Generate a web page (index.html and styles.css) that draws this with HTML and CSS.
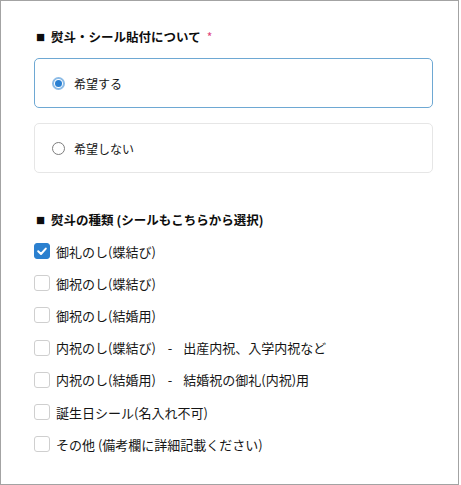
FILE: index.html
```html
<!DOCTYPE html>
<html lang="ja">
<head>
<meta charset="utf-8">
<link rel="stylesheet" href="styles.css">
</head>
<body>
<div class="frame">
  <h2 class="heading"><span class="sq">■</span>熨斗・シール貼付について<span class="req">*</span></h2>
  <label class="choice selected">
    <span class="radio on"></span>
    <span class="choice-text">希望する</span>
  </label>
  <label class="choice">
    <span class="radio"></span>
    <span class="choice-text">希望しない</span>
  </label>

  <h2 class="heading heading-2"><span class="sq">■</span>熨斗の種類 (シールもこちらから選択)</h2>
  <ul class="checks">
    <li class="check-row"><span class="box checked"><svg viewBox="0 0 16 16" width="16" height="16"><path d="M4.2 8.3 L7 11 L11.8 5.6" fill="none" stroke="#fff" stroke-width="2" stroke-linecap="round" stroke-linejoin="round"/></svg></span><span class="check-text">御礼のし(蝶結び)</span></li>
    <li class="check-row"><span class="box"></span><span class="check-text">御祝のし(蝶結び)</span></li>
    <li class="check-row"><span class="box"></span><span class="check-text">御祝のし(結婚用)</span></li>
    <li class="check-row"><span class="box"></span><span class="check-text">内祝のし(蝶結び)<span class="dash">-</span>出産内祝、入学内祝など</span></li>
    <li class="check-row"><span class="box"></span><span class="check-text">内祝のし(結婚用)<span class="dash">-</span>結婚祝の御礼(内祝)用</span></li>
    <li class="check-row"><span class="box"></span><span class="check-text">誕生日シール(名入れ不可)</span></li>
    <li class="check-row"><span class="box"></span><span class="check-text">その他 (備考欄に詳細記載ください)</span></li>
  </ul>
</div>
</body>
</html>
```

FILE: styles.css
```css
html, body {
  margin: 0;
  padding: 0;
  background: #fff;
}
body {
  font-family: "Noto Sans CJK JP", "Noto Sans", sans-serif;
  color: #151515;
}
.frame {
  box-sizing: border-box;
  width: 459px;
  height: 485px;
  border: 1px solid #a3a3a3;
  padding: 26px 26px 0 33px;
}
.heading {
  margin: 0 0 11px;
  font-size: 12.5px;
  line-height: 20px;
  font-weight: 700;
  color: #0d0d0d;
  display: flex;
  align-items: center;
}
.heading-2 {
  margin-top: 37px;
  margin-bottom: 5px;
}
.sq {
  font-family: "Liberation Sans", sans-serif;
  font-size: 15px;
  font-weight: 400;
  line-height: 20px;
  margin: 0 6px 0 2px;
}
.req {
  color: #e0457b;
  font-weight: 400;
  font-size: 12px;
  margin-left: 6px;
}
.choice {
  box-sizing: border-box;
  display: flex;
  align-items: center;
  width: 399px;
  height: 50px;
  border: 1px solid #e6e6e6;
  border-radius: 5px;
  padding-left: 17px;
  margin-bottom: 15px;
  font-size: 12px;
}
.choice.selected {
  border-color: #6ea8d3;
}
.radio {
  box-sizing: border-box;
  width: 13px;
  height: 13px;
  border: 1px solid #7d7d7d;
  border-radius: 50%;
  margin-right: 9px;
  position: relative;
}
.radio.on {
  border: 2px solid #8cbbe6;
  background: #fff;
}
.radio.on::after {
  content: "";
  position: absolute;
  left: 1px;
  top: 1px;
  width: 7px;
  height: 7px;
  border-radius: 50%;
  background: #2a80d2;
}
.checks {
  list-style: none;
  margin: 0;
  padding: 0;
}
.check-row {
  display: flex;
  align-items: center;
  height: 32.2px;
  font-size: 13px;
}
.box {
  box-sizing: border-box;
  width: 16px;
  height: 16px;
  border: 1px solid #cfcfcf;
  border-radius: 3px;
  margin-right: 6px;
  flex: none;
  display: flex;
}
.box.checked {
  background: #2b80cf;
  border-color: #2b80cf;
}
.box.checked svg {
  margin: -1px;
}
.dash {
  margin: 0 11px 0 12px;
}
```
